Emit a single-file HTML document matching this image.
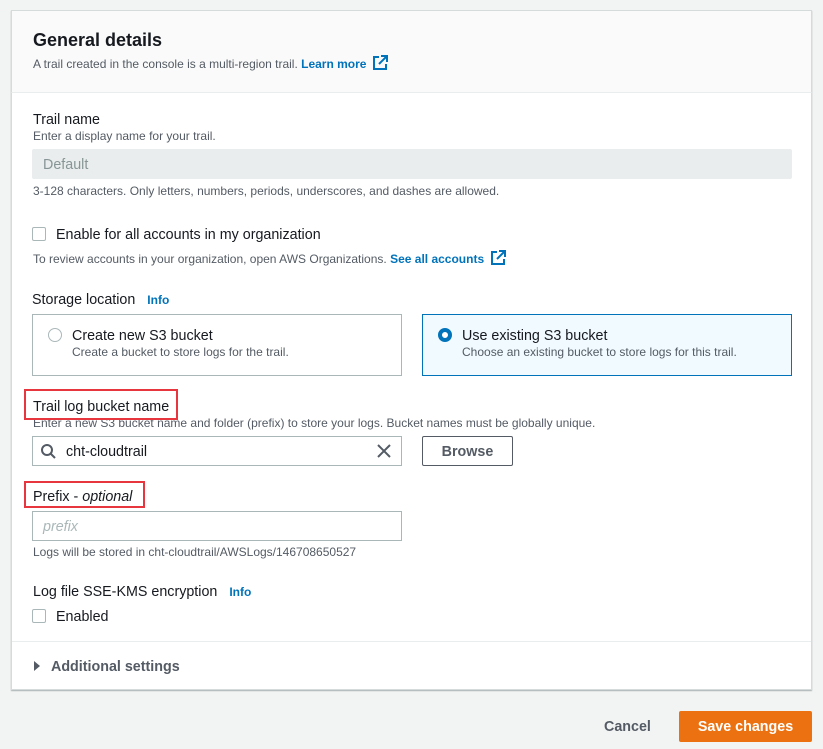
<!DOCTYPE html>
<html><head><meta charset="utf-8"><style>
*{margin:0;padding:0;box-sizing:border-box}
body{width:823px;height:749px;background:#f2f3f3;font-family:"Liberation Sans",sans-serif;color:#16191f;position:relative;overflow:hidden}
.a{position:absolute;white-space:nowrap}
.card{position:absolute;left:11px;top:10px;width:801px;height:680px;background:#fff;border:1px solid #d5dbdb;box-shadow:0 1px 1px rgba(0,28,36,.3)}
.hdr{position:absolute;left:11px;top:10px;width:801px;height:83px;background:#fafafa;border:1px solid #d5dbdb;border-bottom:1px solid #eaeded}
.s{font-size:12px;color:#545b64}
.l{font-size:14.3px}
.lnk{color:#0073bb;font-weight:bold}
.box{position:absolute;border:1px solid #aab7b8;background:#fff}
.red{position:absolute;border:2px solid #e8363f}
.ext{display:inline-block;vertical-align:-3px;margin-left:6px}
</style></head><body>
<div class="card"></div>
<div class="hdr"></div>
<div class="a" style="left:33px;top:30px;font-size:18px;font-weight:bold">General details</div>
<div class="a s" style="left:33px;top:55px">A trail created in the console is a multi-region trail. <span class="lnk">Learn more</span><svg class="ext" width="16" height="16" viewBox="0 0 16 16" fill="none" stroke="#0073bb" stroke-width="2"><path d="M7 2H2v12h12V9"/><path d="M9 1h6v6M15 1L7 9"/></svg></div>

<div class="a l" style="left:33px;top:112px">Trail name</div>
<div class="a s" style="left:33px;top:129px">Enter a display name for your trail.</div>
<div class="a" style="left:32px;top:149px;width:760px;height:30px;background:#eaeded;border-radius:2px"></div>
<div class="a l" style="left:43px;top:157px;color:#879596">Default</div>
<div class="a s" style="left:33px;top:184px">3-128 characters. Only letters, numbers, periods, underscores, and dashes are allowed.</div>

<div class="a" style="left:32px;top:227px;width:14px;height:14px;border:1px solid #aab7b8;border-radius:2px"></div>
<div class="a l" style="left:56px;top:227px">Enable for all accounts in my organization</div>
<div class="a s" style="left:33px;top:250px">To review accounts in your organization, open AWS Organizations. <span class="lnk">See all accounts</span><svg class="ext" width="16" height="16" viewBox="0 0 16 16" fill="none" stroke="#0073bb" stroke-width="2"><path d="M7 2H2v12h12V9"/><path d="M9 1h6v6M15 1L7 9"/></svg></div>

<div class="a l" style="left:32px;top:292px">Storage location <span class="lnk" style="font-size:12px;margin-left:8px">Info</span></div>
<div class="box" style="left:32px;top:314px;width:370px;height:62px;border-color:#aab7b8"></div>
<div class="a" style="left:48px;top:328px;width:14px;height:14px;border:1px solid #aab7b8;border-radius:50%"></div>
<div class="a l" style="left:72px;top:328px">Create new S3 bucket</div>
<div class="a s" style="left:72px;top:345px">Create a bucket to store logs for the trail.</div>
<div class="box" style="left:422px;top:314px;width:370px;height:62px;border-color:#0073bb;background:#f1faff"></div>
<div class="a" style="left:438px;top:328px;width:14px;height:14px;border:4px solid #0073bb;border-radius:50%;background:#fff"></div>
<div class="a l" style="left:462px;top:328px">Use existing S3 bucket</div>
<div class="a s" style="left:462px;top:345px">Choose an existing bucket to store logs for this trail.</div>

<div class="a l" style="left:33px;top:399px">Trail log bucket name</div>
<div class="a s" style="left:33px;top:416px">Enter a new S3 bucket name and folder (prefix) to store your logs. Bucket names must be globally unique.</div>
<div class="red" style="left:24px;top:389px;width:154px;height:31px"></div>
<div class="box" style="left:32px;top:436px;width:370px;height:30px"></div>
<svg class="a" style="left:40px;top:443px" width="16" height="16" viewBox="0 0 16 16" fill="none" stroke="#545b64" stroke-width="2"><circle cx="7" cy="7" r="5"/><path d="M10.5 10.5L15 15"/></svg>
<div class="a l" style="left:66px;top:444px">cht-cloudtrail</div>
<svg class="a" style="left:376px;top:443px" width="16" height="16" viewBox="0 0 16 16" stroke="#545b64" stroke-width="2"><path d="M2 2l12 12M14 2L2 14"/></svg>
<div class="a" style="left:422px;top:436px;width:91px;height:30px;border:1px solid #545b64;border-radius:2px;font-size:14.3px;font-weight:bold;color:#545b64;text-align:center;line-height:30px">Browse</div>

<div class="red" style="left:24px;top:481px;width:121px;height:27px"></div>
<div class="a l" style="left:33px;top:489px">Prefix - <i>optional</i></div>
<div class="box" style="left:32px;top:511px;width:370px;height:30px"></div>
<div class="a l" style="left:43px;top:519px;color:#aab7b8;font-style:italic">prefix</div>
<div class="a s" style="left:33px;top:545px">Logs will be stored in cht-cloudtrail/AWSLogs/146708650527</div>

<div class="a l" style="left:33px;top:584px">Log file SSE-KMS encryption <span class="lnk" style="font-size:12px;margin-left:8px">Info</span></div>
<div class="a" style="left:32px;top:609px;width:14px;height:14px;border:1px solid #aab7b8;border-radius:2px"></div>
<div class="a l" style="left:56px;top:609px">Enabled</div>

<div class="a" style="left:12px;top:641px;width:799px;height:1px;background:#eaeded"></div>
<svg class="a" style="left:33px;top:660px" width="8" height="12" viewBox="0 0 8 12"><path d="M1 1l6 5-6 5z" fill="#545b64"/></svg>
<div class="a l" style="left:51px;top:659px;font-weight:bold;color:#545b64">Additional settings</div>

<div class="a l" style="left:604px;top:719px;font-weight:bold;color:#545b64">Cancel</div>
<div class="a" style="left:679px;top:711px;width:133px;height:31px;background:#ec7211;border-radius:2px;color:#fff;font-size:14.3px;font-weight:bold;text-align:center;line-height:32px">Save changes</div>
</body></html>
